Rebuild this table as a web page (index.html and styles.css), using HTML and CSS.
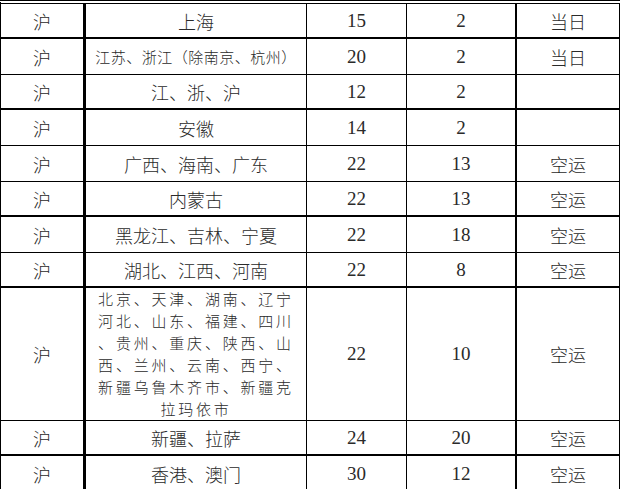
FILE: index.html
```html
<!DOCTYPE html>
<html lang="zh-CN">
<head>
<meta charset="utf-8">
<title>运费表</title>
<link rel="stylesheet" href="styles.css">
</head>
<body>
<table class="rates">
  <colgroup>
    <col class="c-from">
    <col class="c-dest">
    <col class="c-first">
    <col class="c-next">
    <col class="c-mode">
  </colgroup>
  <tbody>
    <tr class="r35 thick">
      <td>沪</td><td>上海</td><td class="num">15</td><td class="num">2</td><td>当日</td>
    </tr>
    <tr class="r36">
      <td>沪</td><td class="small">江苏、浙江（除南京、杭州）</td><td class="num">20</td><td class="num">2</td><td>当日</td>
    </tr>
    <tr class="r35 thick">
      <td>沪</td><td>江、浙、沪</td><td class="num">12</td><td class="num">2</td><td></td>
    </tr>
    <tr class="r36">
      <td>沪</td><td>安徽</td><td class="num">14</td><td class="num">2</td><td></td>
    </tr>
    <tr class="r36">
      <td>沪</td><td>广西、海南、广东</td><td class="num">22</td><td class="num">13</td><td>空运</td>
    </tr>
    <tr class="r35 thick">
      <td>沪</td><td>内蒙古</td><td class="num">22</td><td class="num">13</td><td>空运</td>
    </tr>
    <tr class="r36">
      <td>沪</td><td>黑龙江、吉林、宁夏</td><td class="num">22</td><td class="num">18</td><td>空运</td>
    </tr>
    <tr class="r35 thick">
      <td>沪</td><td>湖北、江西、河南</td><td class="num">22</td><td class="num">8</td><td>空运</td>
    </tr>
    <tr class="r132">
      <td>沪</td>
      <td class="multi">北京、天津、湖南、辽宁<br>河北、山东、福建、四川<br>、贵州、重庆、陕西、山<br>西、兰州、云南、西宁、<br>新疆乌鲁木齐市、新疆克<br>拉玛依市</td>
      <td class="num">22</td><td class="num">10</td><td>空运</td>
    </tr>
    <tr class="r35 thick">
      <td>沪</td><td>新疆、拉萨</td><td class="num">24</td><td class="num">20</td><td>空运</td>
    </tr>
    <tr class="r36">
      <td>沪</td><td>香港、澳门</td><td class="num">30</td><td class="num">12</td><td>空运</td>
    </tr>
  </tbody>
</table>
</body>
</html>
```

FILE: styles.css
```css
html, body {
  margin: 0;
  padding: 0;
  background: #ffffff;
}

.rates {
  border-collapse: separate;
  border-spacing: 0;
  table-layout: fixed;
  width: 620px;
  border-left: 1px solid #000;
  border-top: 4px double #000;
  font-family: "Noto Sans CJK SC", "Noto Sans CJK JP", sans-serif;
  font-weight: 300;
  font-size: 18px;
  color: #2a2a2a;
  text-spacing-trim: space-all;
}

.c-from  { width: 85px; }
.c-dest  { width: 221px; }
.c-first { width: 100px; }
.c-next  { width: 110px; }
.c-mode  { width: 103px; }

.rates td {
  box-sizing: border-box;
  padding: 0;
  text-align: center;
  vertical-align: middle;
  border-right: 1px solid #000;
  border-bottom: 1px solid #000;
  line-height: 22px;
  white-space: nowrap;
}

.rates td:nth-child(1) { border-right-width: 3px; }
.rates td:nth-child(4) { border-right-width: 2px; }

.rates tr.thick td { border-bottom-width: 2px; }

.r35 td { height: 35px; }
.r36 td { height: 36px; }
.r132 td { height: 132px; }

.rates td.num {
  font-family: "Liberation Serif", "DejaVu Serif", serif;
  font-weight: 400;
  font-size: 19px;
}

.rates td.small {
  font-size: 15px;
  letter-spacing: 0.5px;
}

.rates td.multi {
  font-size: 15px;
  letter-spacing: 2.8px;
  line-height: 22px;
}
```
